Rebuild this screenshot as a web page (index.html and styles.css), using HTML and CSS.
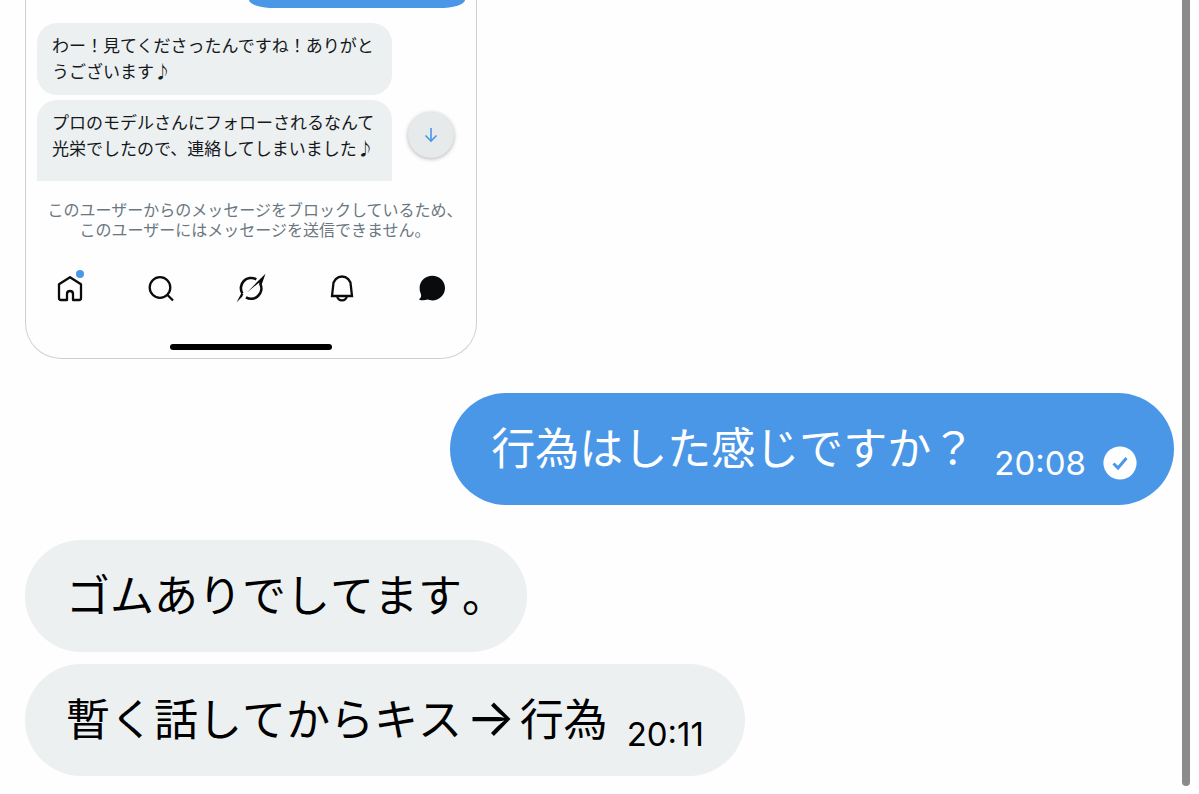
FILE: index.html
```html
<!DOCTYPE html>
<html lang="ja">
<head>
<meta charset="utf-8">
<meta name="viewport" content="width=device-width, initial-scale=1">
<title>メッセージ</title>
<link rel="stylesheet" href="styles.css">
</head>
<body>
<main class="chat">
  <section class="shot">
    <div class="shot-sent"></div>
    <div class="shot-thread">
      <div class="shot-messages">
        <p class="shot-bubble">わー！見てくださったんですね！ありがとうございます♪</p>
        <p class="shot-bubble shot-bubble-cut">プロのモデルさんにフォローされるなんて光栄でしたので、連絡してしまいました♪</p>
      </div>
      <button class="jump" type="button" aria-label="最新へ移動">
        <svg width="16" height="16" viewBox="0 0 16 16" fill="none" stroke="currentColor" stroke-width="1.6"><path d="M8 1v13M2.5 8.5 8 14l5.5-5.5"/></svg>
      </button>
    </div>
    <p class="notice">このユーザーからのメッセージをブロックしているため、<br>このユーザーにはメッセージを送信できません。</p>
    <nav class="tabs">
      <button class="tab" type="button" aria-label="ホーム">
        <svg width="30" height="30" viewBox="0 0 30 30" fill="none" stroke="currentColor" stroke-width="2.3" stroke-linejoin="round"><path d="M4 11.2 15 4.2l11 7V25q0 2-2 2h-6v-6q0-3-3-3t-3 3v6H6q-2 0-2-2z"/></svg>
        <span class="dot"></span>
      </button>
      <button class="tab" type="button" aria-label="検索">
        <svg width="30" height="30" viewBox="0 0 30 30" fill="none" stroke="currentColor" stroke-width="2.3"><circle cx="14" cy="14.5" r="10.3"/><path d="m21.5 22 5.5 5.5"/></svg>
      </button>
      <button class="tab" type="button" aria-label="Grok">
        <svg width="30" height="30" viewBox="0 0 30 30"><path fill="none" stroke="currentColor" stroke-width="2.6" d="M20.300 6.400A10.200 10.200 0 0 0 6.400 20.500M24.400 11.200A10.200 10.200 0 0 1 10 24.300"/><path fill="currentColor" d="M29.500 .800 25.600 11.800 23 11.800 23.300 9.400 11.200 19.200 21.500 8.600zM.500 29.500l4.700-9 2.200.400-1.300 2.900z"/></svg>
      </button>
      <button class="tab" type="button" aria-label="通知">
        <svg width="30" height="30" viewBox="0 0 30 30" fill="none" stroke="currentColor" stroke-width="2.3"><path d="M6.200 12.500a8.800 9 0 0 1 17.600 0l1.200 10.500H5zM10.200 23a4.800 4.300 0 0 0 9.600 0"/></svg>
      </button>
      <button class="tab" type="button" aria-label="メッセージ">
        <svg width="30" height="30" viewBox="0 0 30 30" fill="currentColor"><path d="M15.3 2.8c7 0 12.7 5.3 12.7 12.3s-5.7 12.4-12.7 12.4c-1.8 0-3.4-.5-4.8-.9-2 .8-5.2.9-7.5.4-.8-.2-1-.8-.4-1.3 1.6-1.5 1.9-2.8 1.2-5A12 12 0 0 1 2.600 15.100C2.600 8 8.300 2.800 15.300 2.800z"/></svg>
      </button>
    </nav>
    <div class="home-bar"></div>
  </section>

  <article class="message sent">
    <p class="text">行為はした感じですか？</p>
    <time class="time">20:08</time>
    <svg class="check" width="34" height="34" viewBox="0 0 34 34" role="img" aria-label="送信済み"><circle cx="17" cy="17" r="16.600" fill="#fff"/><path d="m10.500 17.500 4.500 4.500 8.500-10" fill="none" stroke="#4a97e8" stroke-width="3"/></svg>
  </article>
  <article class="message received untimed">
    <p class="text">ゴムありでしてます。</p>
  </article>
  <article class="message received follow">
    <p class="text">暫く話してからキス<span class="arrow">→</span>行為</p>
    <time class="time">20:11</time>
  </article>
</main>
<div class="scroll-track"><div class="scroll-thumb"></div></div>
</body>
</html>
```
FILE: styles.css
```css
* { box-sizing: border-box; }

body {
  margin: 0;
  display: flex;
  min-height: 100vh;
  background: #fefefe;
  color: #0a0b0d;
  font-family: Inter, "Noto Sans CJK JP", sans-serif;
}

p { margin: 0; }

button {
  padding: 0;
  border: 0;
  background: none;
  color: inherit;
}

svg { display: block; }

.chat {
  flex: 1;
  display: flex;
  flex-direction: column;
  align-items: flex-start;
  padding: 0 8px 18px 25px;
}

.shot {
  display: flex;
  flex-direction: column;
  width: 100%;
  max-width: 452px;
  padding: 0 11px 8px;
  border: 1px solid #cdd0d3;
  border-top: 0;
  border-radius: 0 0 36px 36px;
}

.shot-sent {
  align-self: flex-end;
  width: 216px;
  height: 8px;
  border-radius: 0 0 26px 26px / 0 0 8px 8px;
  background: #4a97e8;
}

.shot-thread {
  display: flex;
  align-items: flex-end;
  justify-content: space-between;
  padding: 15px 11px 0 0;
}

.shot-messages {
  display: flex;
  flex-direction: column;
  gap: 5px;
  width: 355px;
}

.shot-bubble {
  padding: 10px 15px;
  border-radius: 20px;
  background: #ecf0f1;
  color: #15181b;
  font-size: 17px;
  line-height: 26px;
}

.shot-bubble-cut {
  padding-bottom: 19px;
  border-radius: 20px 20px 0 0;
}

.jump {
  display: grid;
  place-items: center;
  width: 46px;
  height: 46px;
  margin-bottom: 23px;
  border-radius: 50%;
  background: #e6eaeb;
  box-shadow: 0 1px 4px rgba(0, 0, 0, .3);
  color: #4a97e8;
}

.notice {
  margin-top: 19px;
  color: #6b7780;
  font-size: 16px;
  line-height: 20px;
  font-feature-settings: "halt";
  text-align: center;
  white-space: nowrap;
}

.tabs {
  display: flex;
  justify-content: space-between;
  margin-top: 33px;
  padding: 0 18px;
}

.tab { position: relative; }

.dot {
  position: absolute;
  top: -3px;
  right: 1px;
  width: 8px;
  height: 8px;
  border-radius: 50%;
  background: #4a97e8;
}

.home-bar {
  align-self: center;
  width: 162px;
  height: 6px;
  margin-top: 41px;
  border-radius: 3px;
  background: #000;
}

.message {
  display: flex;
  align-items: center;
  min-height: 112px;
  margin-top: 35px;
  padding: 0 41px;
  border-radius: 56px;
}

.sent {
  align-self: flex-end;
  margin-top: 34px;
  padding-right: 37px;
  background: #4a97e8;
  color: #fff;
}

.received {
  background: #ecf0f1;
  color: #000;
}

.untimed { padding-right: 21px; }

.follow { margin-top: 12px; }

.text {
  font-size: 44px;
  font-kerning: none;
  line-height: 60px;
}

.arrow {
  margin: 0 4px;
  font-size: 52px;
  line-height: 1;
}

.time {
  margin: 28px 0 0 19px;
  font-size: 33px;
  font-weight: 400;
  line-height: 40px;
}

.check { margin: 28px 0 0 17px; }

.scroll-track {
  width: 8px;
  margin: 0 9px 8px 0;
}

.scroll-thumb {
  height: 100%;
  border-radius: 0 0 4px 4px;
  background: #8b8b8b;
}
```
